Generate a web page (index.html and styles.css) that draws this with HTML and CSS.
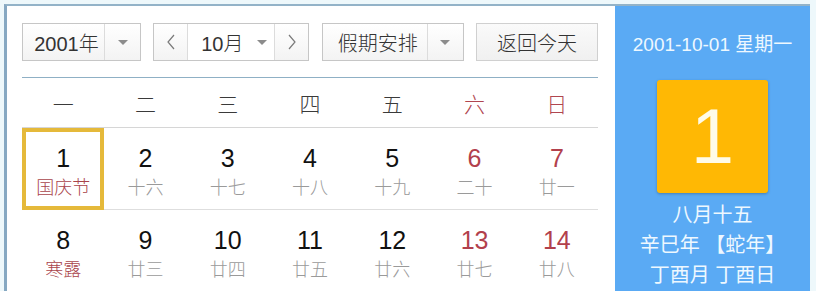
FILE: index.html
```html
<!DOCTYPE html>
<html lang="zh-CN">
  <head>
    <meta charset="UTF-8" />
    <meta name="viewport" content="width=device-width, initial-scale=1.0" />
    <title>万年历</title>
    <link rel="stylesheet" href="styles.css">
  </head>
  <body>
    <div class="calendar">
      <div class="main">
        <div class="toolbar">
          <div class="select year">
            <span class="select-text">2001年</span>
            <span class="select-arrow"><i class="caret"></i></span>
          </div>
          <div class="month-group">
            <span class="nav">
              <svg width="8" height="16" viewBox="0 0 8 16"><polyline points="7,1 1,8 7,15" fill="none" stroke="#7a7a7a" stroke-width="1.2" /></svg>
            </span>
            <span class="month"><span>10月</span><i class="caret"></i></span>
            <span class="nav">
              <svg width="8" height="16" viewBox="0 0 8 16"><polyline points="1,1 7,8 1,15" fill="none" stroke="#7a7a7a" stroke-width="1.2" /></svg>
            </span>
          </div>
          <div class="select holiday">
            <span class="select-text">假期安排</span>
            <span class="select-arrow"><i class="caret"></i></span>
          </div>
          <button class="today">返回今天</button>
        </div>

        <div class="weekdays">
          <span>一</span>
          <span>二</span>
          <span>三</span>
          <span>四</span>
          <span>五</span>
          <span class="weekend">六</span>
          <span class="weekend">日</span>
        </div>

        <div class="days">
          <div class="day selected"><span class="num">1</span><span class="lunar festival">国庆节</span></div>
          <div class="day"><span class="num">2</span><span class="lunar">十六</span></div>
          <div class="day"><span class="num">3</span><span class="lunar">十七</span></div>
          <div class="day"><span class="num">4</span><span class="lunar">十八</span></div>
          <div class="day"><span class="num">5</span><span class="lunar">十九</span></div>
          <div class="day weekend"><span class="num">6</span><span class="lunar">二十</span></div>
          <div class="day weekend"><span class="num">7</span><span class="lunar">廿一</span></div>
          <div class="day"><span class="num">8</span><span class="lunar festival">寒露</span></div>
          <div class="day"><span class="num">9</span><span class="lunar">廿三</span></div>
          <div class="day"><span class="num">10</span><span class="lunar">廿四</span></div>
          <div class="day"><span class="num">11</span><span class="lunar">廿五</span></div>
          <div class="day"><span class="num">12</span><span class="lunar">廿六</span></div>
          <div class="day weekend"><span class="num">13</span><span class="lunar">廿七</span></div>
          <div class="day weekend"><span class="num">14</span><span class="lunar">廿八</span></div>
        </div>
      </div>

      <aside class="panel">
        <div class="panel-date">2001-10-01 星期一</div>
        <div class="big-day">1</div>
        <div class="panel-lunar">八月十五</div>
        <div class="panel-lunar">辛巳年 【蛇年】</div>
        <div class="panel-lunar">丁酉月 丁酉日</div>
      </aside>
    </div>
  </body>
</html>
```

FILE: styles.css
```css
body {
  margin: 0;
  height: 291px;
  overflow: hidden;
  background-color: #eef8fb;
  font-family: "Liberation Sans", "Noto Sans CJK SC", sans-serif;
  color: #222;
}

.calendar {
  display: flex;
  margin: 4px 6px 0 4px;
  border-top: 2px solid #93b3c8;
  border-left: 3px solid #86a8c2;
  background-color: #fff;
  height: 300px;
}

.main {
  width: 576px;
  padding: 17px 17px 0 15px;
}

/* toolbar */
.toolbar {
  display: flex;
  justify-content: space-between;
  height: 38px;
  margin-bottom: 16px;
}

.select,
.month-group,
.today {
  display: flex;
  box-sizing: border-box;
  height: 38px;
  border: 1px solid #c6c6c6;
  background: linear-gradient(#ffffff, #f3f3f3);
  font-size: 20px;
  font-weight: 300;
  color: #333;
}

.year {
  width: 119px;
}

.holiday {
  width: 142px;
}

.select-text {
  flex: 1;
  display: flex;
  align-items: center;
  justify-content: center;
  padding-left: 6px;
  border-right: 1px solid #dcdcdc;
}

.select-arrow {
  width: 35px;
  display: flex;
  align-items: center;
  justify-content: center;
}

.caret {
  width: 0;
  height: 0;
  border-left: 5px solid transparent;
  border-right: 5px solid transparent;
  border-top: 5px solid #8c8c8c;
}

.month-group {
  width: 156px;
}

.nav {
  width: 33px;
  display: flex;
  align-items: center;
  justify-content: center;
}

.month {
  flex: 1;
  display: flex;
  align-items: center;
  justify-content: center;
  gap: 14px;
  border-left: 1px solid #dcdcdc;
  border-right: 1px solid #dcdcdc;
  background: #fff;
  padding-left: 6px;
}

.today {
  width: 122px;
  align-items: center;
  justify-content: center;
  font-family: inherit;
  background: linear-gradient(#fafafa, #f0f0f0);
  border-color: #d0d0d0;
}

/* weekday header */
.weekdays {
  display: grid;
  grid-template-columns: repeat(7, 1fr);
  border-top: 1px solid #8fb0c5;
  border-bottom: 1px solid #d6d6d6;
  height: 49px;
  align-items: center;
  text-align: center;
  font-size: 21px;
  font-weight: 300;
  color: #3a3a3a;
}

.weekdays .weekend {
  color: #b04650;
}

/* day grid */
.days {
  display: grid;
  grid-template-columns: repeat(7, 1fr);
}

.day {
  box-sizing: border-box;
  height: 82px;
  border-bottom: 1px solid #dedede;
  display: flex;
  flex-direction: column;
  align-items: center;
  padding-top: 14px;
}

.num {
  font-size: 25px;
  line-height: 32px;
  color: #111;
}

.lunar {
  margin-top: 2px;
  font-size: 18px;
  line-height: 24px;
  font-weight: 300;
  color: #9a9a9a;
}

.lunar.festival {
  color: #a9444b;
}

.weekend .num {
  color: #b2404c;
}

.day.selected {
  border: 4px solid #e5b93a;
  padding-top: 10px;
}

/* side panel */
.panel {
  width: 195px;
  background-color: #5aaaf4;
  color: #eef8ff;
  display: flex;
  flex-direction: column;
  align-items: center;
  padding-top: 27px;
}

.panel-date {
  font-size: 19px;
  line-height: 24px;
}

.big-day {
  margin-top: 23px;
  width: 111px;
  height: 113px;
  border-radius: 3px;
  background-color: #ffb804;
  box-shadow: 0 1px 3px rgba(0, 0, 0, 0.25);
  display: flex;
  align-items: center;
  justify-content: center;
  font-size: 78px;
  font-weight: 300;
  color: #fffbe8;
}

.panel-lunar {
  font-size: 20px;
  line-height: 30px;
}

.big-day + .panel-lunar {
  margin-top: 7px;
}
```
